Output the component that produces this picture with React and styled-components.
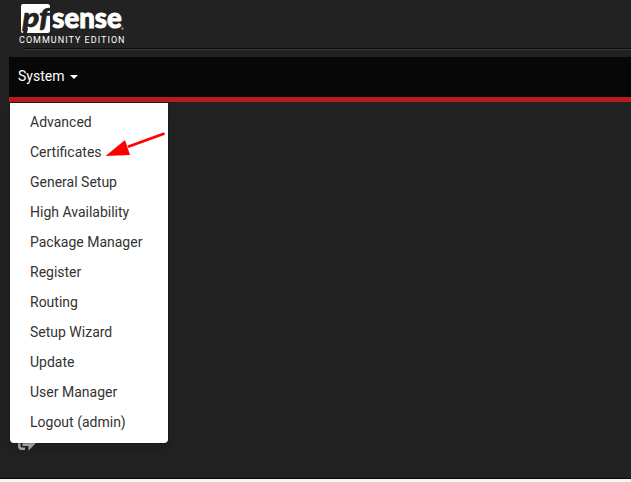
import React from "react";
import styled, { createGlobalStyle } from "styled-components";

const GlobalStyle = createGlobalStyle`
  * { box-sizing: border-box; }
  body {
    margin: 0;
    background: #222222;
    font-family: Roboto, "Liberation Sans", sans-serif;
    font-size: 14px;
    overflow: hidden;
  }
`;

const Page = styled.div`
  display: flex;
  flex-direction: column;
  height: 482px;
  background: #222222;
`;

const Header = styled.header`
  height: 57px;
  flex: none;
  padding-left: 19px;
`;

const Logo = styled.svg`
  display: block;
  width: 108px;
  height: 34px;
  overflow: visible;
`;

const Edition = styled.div`
  height: 14px;
  color: #ffffff;
  font-size: 9px;
  line-height: 12px;
  letter-spacing: 1.02px;
  white-space: nowrap;
`;

const Divider = styled.div`
  margin-left: 5px;
  height: 2px;
  background: #3b3b3b;
  border-top: 1px solid #0c0c0c;
`;

const Navbar = styled.nav`
  position: relative;
  flex: none;
  height: 45px;
  margin-left: 9px;
  padding-left: 9px;
  background: #070707;
  border-bottom: 5px solid #b71c1c;
`;

const NavToggle = styled.button`
  display: flex;
  align-items: center;
  gap: 6px;
  height: 38px;
  padding: 0;
  border: 0;
  background: none;
  color: #ffffff;
  font: 14px/20px Roboto, sans-serif;
`;

const Caret = styled.span`
  margin-top: 2px;
  border-top: 4px solid #ffffff;
  border-left: 4px solid transparent;
  border-right: 4px solid transparent;
`;

const Menu = styled.ul`
  position: absolute;
  z-index: 2;
  top: 46px;
  left: 1px;
  width: 158px;
  height: 340px;
  margin: 0;
  padding: 4px 0 6px;
  list-style: none;
  background: #ffffff;
  border-radius: 0 0 4px 4px;
  box-shadow: 0 6px 12px rgba(0, 0, 0, 0.175), 0 0 0 1px rgba(0, 0, 0, 0.15);
`;

const MenuItem = styled.li`
  height: 30px;
  padding-left: 20px;
  color: #333333;
  line-height: 30px;
  white-space: nowrap;
`;

const Arrow = styled.svg`
  position: absolute;
  z-index: 3;
  top: 71px;
  left: 93px;
  width: 66px;
  height: 32px;
`;

const Body = styled.main`
  flex: 1;
  display: flex;
  align-items: flex-end;
  padding: 0 0 25px 17px;
`;

const LogoutIcon = styled.svg`
  width: 20px;
  height: 18px;
`;

const Footer = styled.footer`
  flex: none;
  height: 4px;
  background: #f5f5f5;
  border-top: 1px solid #080808;
`;

const items = [
  "Advanced",
  "Certificates",
  "General Setup",
  "High Availability",
  "Package Manager",
  "Register",
  "Routing",
  "Setup Wizard",
  "Update",
  "User Manager",
  "Logout (admin)",
];

export default function App() {
  return (
    <Page>
      <GlobalStyle />
      <Header>
        <Logo viewBox="19 0 108 34">
          <path d="M23 4H47.5Q50 4 50 6.5V30.5Q50 33 47.5 33H27L28 28H24L23 33Q21 33 21 31V6Q21 4 23 4Z" fill="#fff" />
          <text x="22.5" y="27.3" fontFamily="Lato" fontSize="27" fontWeight="900" fontStyle="italic" fill="#222" stroke="#222" strokeWidth="0.6" textLength="27" lengthAdjust="spacingAndGlyphs">pf</text>
          <text x="52.3" y="27.8" fontFamily="Lato" fontSize="27.5" fontWeight="900" fill="#fff" stroke="#fff" strokeWidth="0.9" textLength="69.5" lengthAdjust="spacingAndGlyphs">sense</text>
          <circle cx="122.5" cy="28.5" r="1.2" fill="#888" />
        </Logo>
        <Edition>COMMUNITY EDITION</Edition>
        <Divider />
      </Header>
      <Navbar>
        <NavToggle>System<Caret /></NavToggle>
        <Menu>
          {items.map((item) => <MenuItem key={item}>{item}</MenuItem>)}
        </Menu>
        <Arrow viewBox="102 128 66 32">
          <path d="M164.5 133.5L128 146.8" stroke="#f00" strokeWidth="2.8" />
          <path d="M105.5 156L125 140L130 155Z" fill="#f00" />
        </Arrow>
      </Navbar>
      <Body>
        <LogoutIcon viewBox="17 435 20 18">
          <path d="M25 448.8H22Q19.3 448.8 19.3 446V438" fill="none" stroke="#b5b5b5" strokeWidth="2.5" />
          <path d="M22.5 438H29V435L36 443L28.5 450.5V446H22.5Z" fill="#b5b5b5" />
        </LogoutIcon>
      </Body>
      <Footer />
    </Page>
  );
}
